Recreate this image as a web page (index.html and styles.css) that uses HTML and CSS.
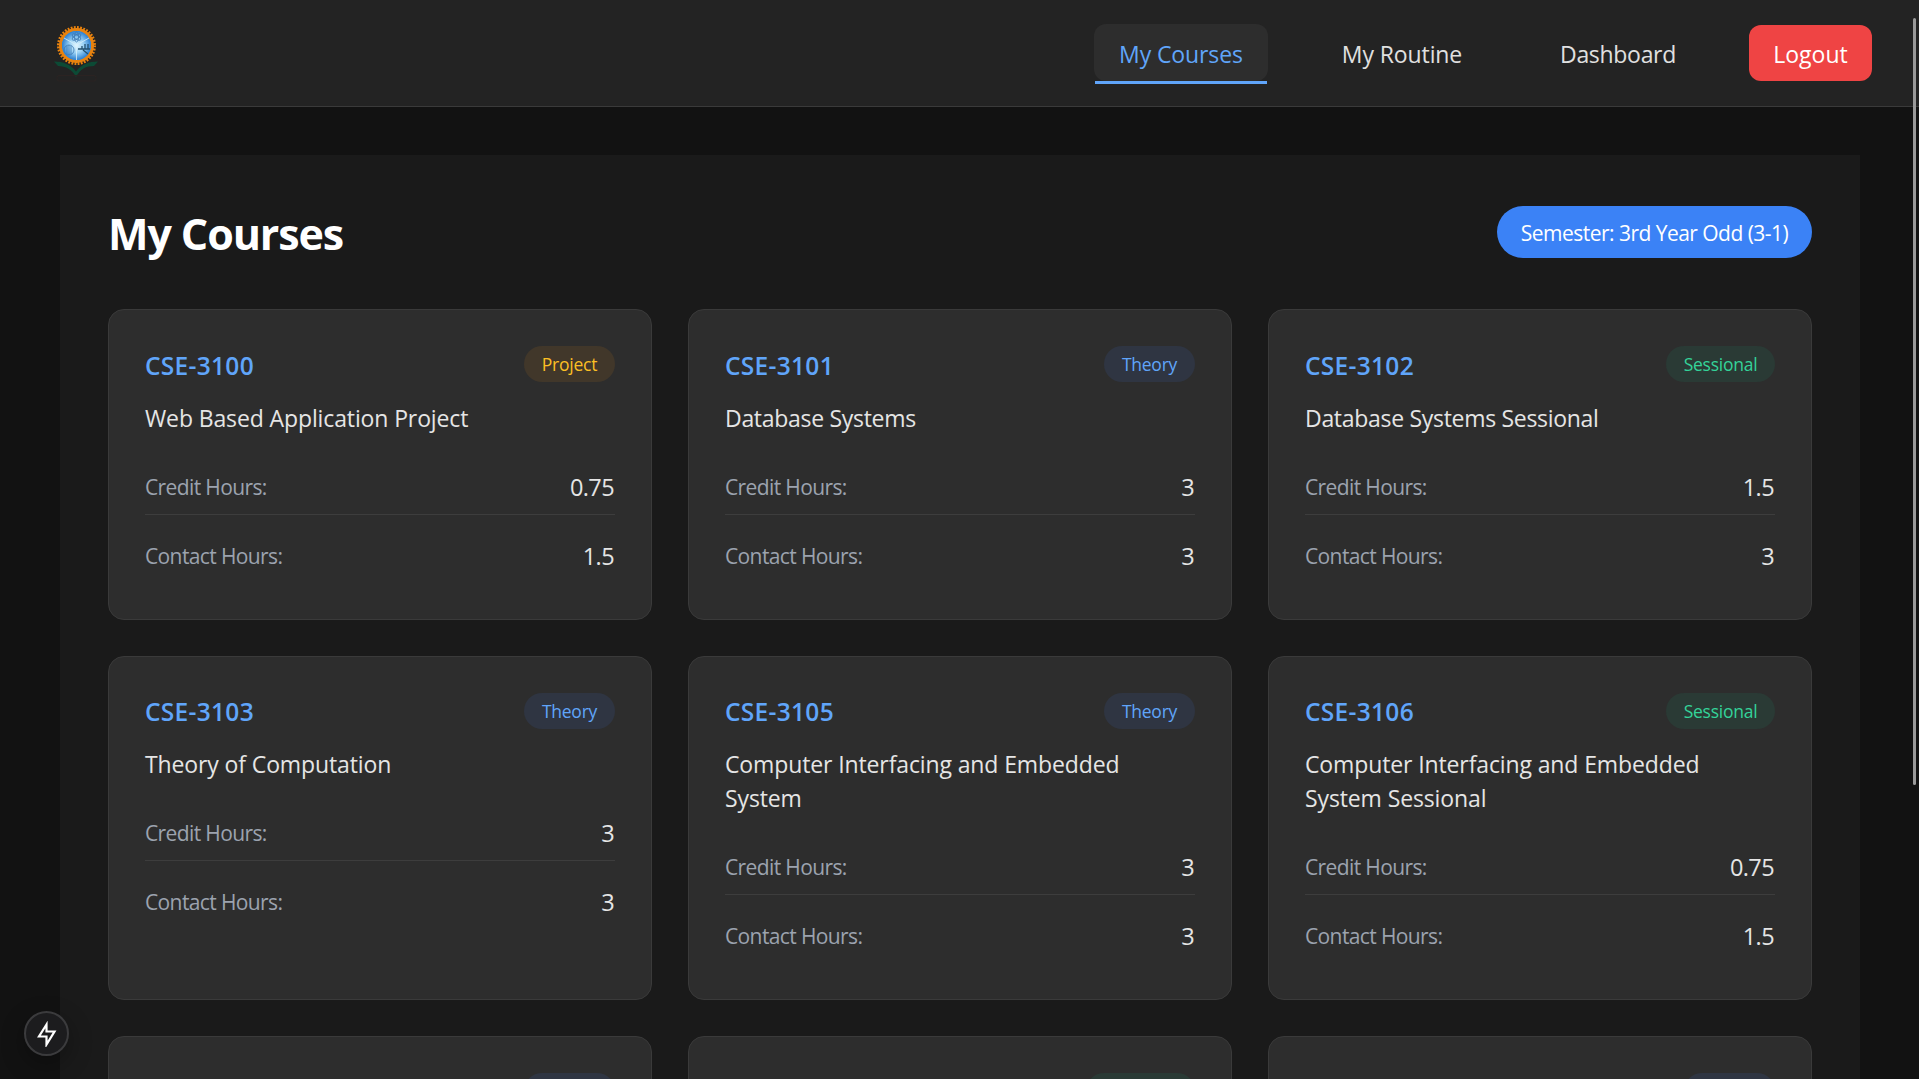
FILE: index.html
```html
<!DOCTYPE html>
<html lang="en">
<head>
<meta charset="utf-8">
<title>My Courses</title>
<link rel="stylesheet" href="styles.css">
</head>
<body>
<header class="navbar">
  <svg class="logo" viewBox="0 0 48 56" aria-label="RUET">
    <path d="M2 37.500c9 0 17 3 22 10 5-7 13-10 22-10l-4 4.500c-8 0-14 3-18 11-4-8-10-10.500-18-11z" fill="#0c4a35"/>
    <rect x="5" y="51.500" width="39" height="5.500" rx="2" fill="none" stroke="#2b2322" stroke-width="1"/>
    <circle cx="24.500" cy="21.500" r="18" fill="none" stroke="#e8820e" stroke-width="3" stroke-dasharray="1.800 1.340"/>
    <circle cx="24.500" cy="21.500" r="16" fill="#4a9fe0" stroke="#e8820e" stroke-width="3"/>
    <circle cx="24.500" cy="21.500" r="14.500" fill="url(#sky)"/>
    <g fill="none" stroke="#3c78b4" stroke-width=".8">
      <ellipse cx="24.500" cy="13" rx="2" ry="5"/>
      <ellipse cx="24.500" cy="13" rx="2" ry="5" transform="rotate(60 24.500 13)"/>
      <ellipse cx="24.500" cy="13" rx="2" ry="5" transform="rotate(120 24.500 13)"/>
      <circle cx="17" cy="26" r="5"/><path d="M15 22v8M17 21v10M19 22v8"/>
    </g>
    <path d="M24.500 36V21M24.500 21L12 14M24.500 21L37 14" stroke="#d9f0fb" stroke-width=".8"/>
    <path d="M26 25h12M30 25v-3M33 25v-5M36 25v-5M31 26l5 4" stroke="#24506e" stroke-width="1.300"/>
    <defs><radialGradient id="sky"><stop offset="0" stop-color="#e2f6ff"/><stop offset=".5" stop-color="#9bd2f4"/><stop offset="1" stop-color="#2c7fd0"/></radialGradient></defs>
  </svg>
  <nav class="nav-links">
    <a class="nav-link active">My Courses</a>
    <a class="nav-link routine">My Routine</a>
    <a class="nav-link dashboard">Dashboard</a>
    <button class="logout">Logout</button>
  </nav>
</header>
<main class="panel">
  <div class="panel-head">
    <h1 class="title">My Courses</h1>
    <span class="semester">Semester: 3rd Year Odd (3-1)</span>
  </div>
  <div class="grid">
    <article class="card"><div class="card-head"><h2 class="code">CSE-3100</h2><span class="badge project">Project</span></div><p class="name">Web Based Application Project</p><div class="row"><span class="label">Credit Hours:</span><span class="value">0.75</span></div><div class="row"><span class="label">Contact Hours:</span><span class="value">1.5</span></div></article>
    <article class="card"><div class="card-head"><h2 class="code">CSE-3101</h2><span class="badge theory">Theory</span></div><p class="name tight">Database Systems</p><div class="row"><span class="label">Credit Hours:</span><span class="value">3</span></div><div class="row"><span class="label">Contact Hours:</span><span class="value">3</span></div></article>
    <article class="card"><div class="card-head"><h2 class="code">CSE-3102</h2><span class="badge sessional">Sessional</span></div><p class="name tight">Database Systems Sessional</p><div class="row"><span class="label">Credit Hours:</span><span class="value">1.5</span></div><div class="row"><span class="label">Contact Hours:</span><span class="value">3</span></div></article>
    <article class="card"><div class="card-head"><h2 class="code">CSE-3103</h2><span class="badge theory">Theory</span></div><p class="name">Theory of Computation</p><div class="row"><span class="label">Credit Hours:</span><span class="value">3</span></div><div class="row"><span class="label">Contact Hours:</span><span class="value">3</span></div></article>
    <article class="card"><div class="card-head"><h2 class="code">CSE-3105</h2><span class="badge theory">Theory</span></div><p class="name">Computer Interfacing and Embedded System</p><div class="row"><span class="label">Credit Hours:</span><span class="value">3</span></div><div class="row"><span class="label">Contact Hours:</span><span class="value">3</span></div></article>
    <article class="card"><div class="card-head"><h2 class="code">CSE-3106</h2><span class="badge sessional">Sessional</span></div><p class="name">Computer Interfacing and Embedded System Sessional</p><div class="row"><span class="label">Credit Hours:</span><span class="value">0.75</span></div><div class="row"><span class="label">Contact Hours:</span><span class="value">1.5</span></div></article>
    <article class="card"><div class="card-head end"><span class="badge theory"></span></div></article>
    <article class="card"><div class="card-head end"><span class="badge sessional"></span></div></article>
    <article class="card"><div class="card-head end"><span class="badge theory"></span></div></article>
  </div>
</main>
<div class="dev-button">
  <svg width="26" height="26" viewBox="0 0 26 26" fill="none" stroke="#fff" stroke-width="2.200" stroke-linejoin="miter"><path d="M12.500 3.500L5 15.500h7.500v8L20.500 10.500H12.500z"/></svg>
</div>
<div class="scroll-thumb"></div>
</body>
</html>
```
FILE: styles.css
```css
* { box-sizing: border-box; }
body {
  margin: 0;
  height: 1079px;
  overflow: hidden;
  background: #121212;
  color: #e5e5e5;
  font-family: "Open Sans", "Noto Sans", sans-serif;
  font-size: 23px;
}
h1, h2, p { margin: 0; }
.navbar {
  display: flex;
  justify-content: space-between;
  height: 107px;
  padding: 24px 47px 0 52px;
  background: #232323;
  border-bottom: 1px solid #3a3a3a;
}
.logo { width: 48px; height: 56px; overflow: visible; }
.nav-links { display: flex; align-items: flex-start; }
.nav-link {
  display: flex;
  justify-content: center;
  width: 174px;
  height: 60px;
  padding-top: 14px;
  line-height: 32px;
  letter-spacing: -.1px;
  color: #e0e0e0;
  white-space: nowrap;
}
.nav-link.active {
  position: relative;
  height: 57px;
  background: #2d2d2d;
  border-radius: 12px;
  color: #60a5fa;
}
.nav-link.active::after {
  content: "";
  position: absolute;
  left: 1px;
  right: 1px;
  top: 57px;
  height: 3px;
  background: #60a5fa;
}
.nav-link.routine { margin-left: 47px; }
.nav-link.dashboard { margin-left: 42px; letter-spacing: -.3px; }
.logout {
  width: 123px;
  height: 56px;
  margin: 1px 0 0 44px;
  padding: 2px 0 0;
  border: 0;
  border-radius: 12px;
  background: #ef4444;
  color: #fff;
  font: inherit;
}
.panel {
  height: 924px;
  margin: 48px 59px 0 60px;
  padding: 51px 48px 0;
  overflow: hidden;
  background: #1a1a1a;
}
.panel-head { display: flex; justify-content: space-between; height: 103px; }
.title {
  color: #fff;
  font-size: 43px;
  line-height: 56px;
  letter-spacing: -1.100px;
}
.semester {
  width: 315px;
  height: 52px;
  border-radius: 26px;
  background: #3b82f6;
  color: #fff;
  font-size: 21px;
  line-height: 54px;
  letter-spacing: -.53px;
  text-align: center;
}
.grid {
  display: grid;
  grid-template-columns: repeat(3, 544px);
  grid-template-rows: 311px 344px 311px;
  gap: 36px;
}
.card {
  padding: 36px;
  background: #2d2d2d;
  border: 1px solid #3a3a3a;
  border-radius: 16px;
}
.card-head { display: flex; justify-content: space-between; height: 55px; }
.card-head.end { justify-content: flex-end; }
.code {
  color: #60a5fa;
  font-size: 24.500px;
  font-weight: 600;
  line-height: 39px;
  letter-spacing: .3px;
}
.card:nth-child(n+4) .card-head { height: 54px; }
.card:nth-child(n+4) .code { line-height: 37px; }
.badge {
  width: 91px;
  height: 36px;
  border-radius: 18px;
  font-size: 17.500px;
  line-height: 37px;
  letter-spacing: -.25px;
  text-align: center;
}
.badge.project { background: #41372a; color: #fbbf24; }
.badge.theory { background: #2f3542; color: #60a5fa; }
.badge.sessional { width: 109px; background: #2a3a35; color: #34d399; }
.name {
  margin-bottom: 19.500px;
  font-size: 23px;
  line-height: 34px;
  letter-spacing: -.12px;
}
.name.tight { letter-spacing: -.3px; }
.row {
  display: flex;
  justify-content: space-between;
  height: 59px;
  padding-top: 15px;
  line-height: 34px;
}
.row + .row { height: 70px; padding-top: 24px; border-top: 1px solid #3d3d3d; }
.label { font-size: 21px; letter-spacing: -.62px; color: #9ca3af; }
.value { margin-right: 1px; font-size: 23.500px; letter-spacing: -.6px; }
.dev-button {
  position: fixed;
  left: 24px;
  top: 1011px;
  display: flex;
  align-items: center;
  justify-content: center;
  width: 45px;
  height: 45px;
  border: 2px solid #3b3b3d;
  border-radius: 50%;
  background: #1c1c1e;
  box-shadow: 0 8px 24px rgba(0, 0, 0, .3);
}
.scroll-thumb {
  position: fixed;
  left: 1913px;
  top: 18px;
  width: 3px;
  height: 767px;
  border-radius: 2px;
  background: #9a9a9a;
}
```
